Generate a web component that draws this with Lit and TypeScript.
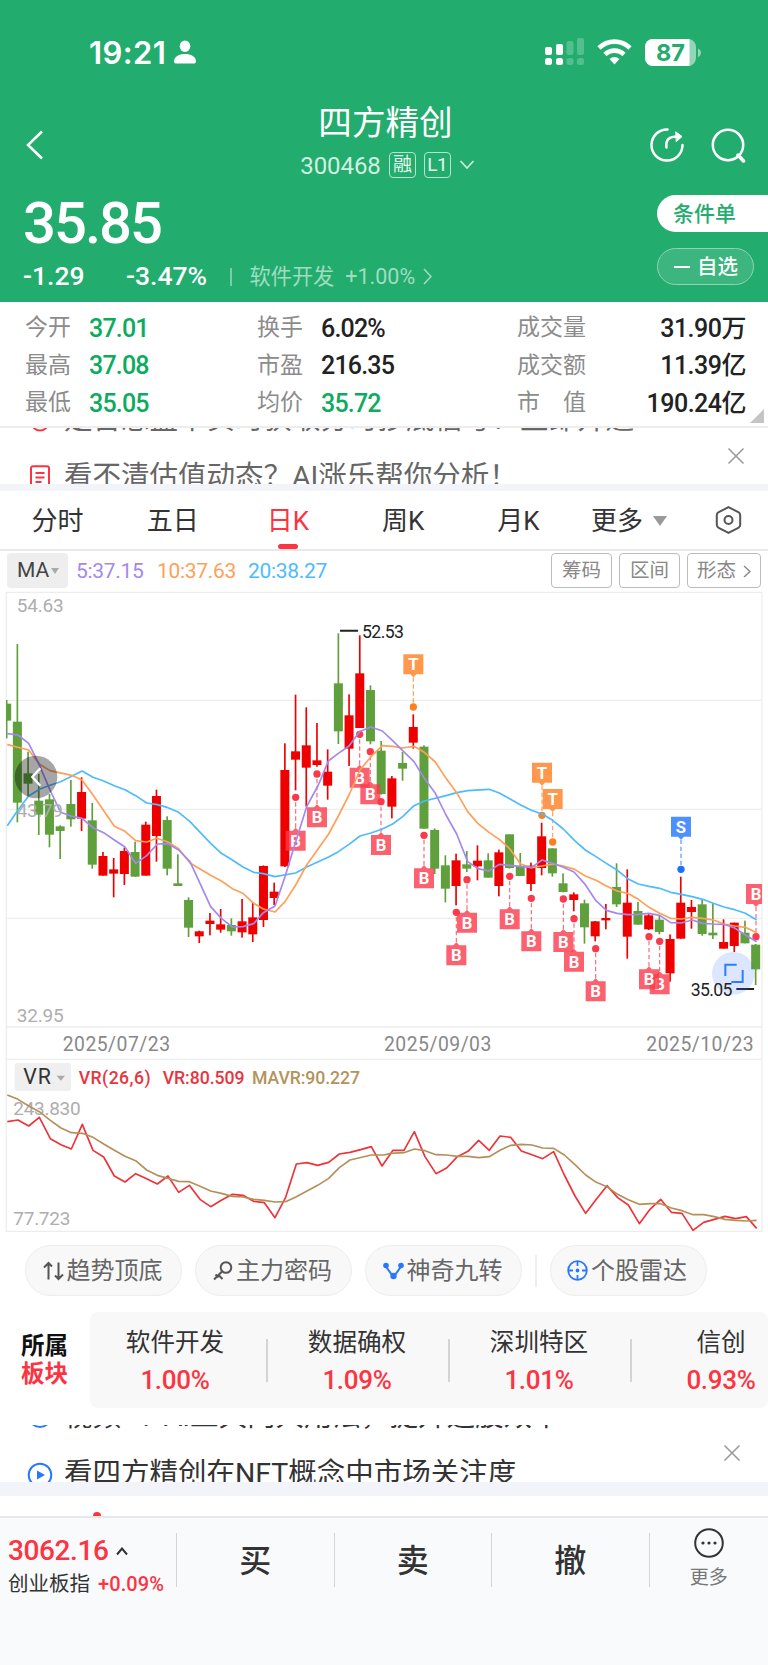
import { LitElement, html, svg, css } from "lit";
import { customElement } from "lit/decorators.js";

type Candle = [number, number, number, number, 0 | 1];

// Each candle: high, body top, body bottom, low, rising flag (chart units, 3 per pixel).
const CANDLES: Candle[] = [
  [330, 341, 392, 445, 0], [162, 395, 638, 697, 0], [485, 550, 581, 620, 0], [552, 632, 674, 735, 0],
  [612, 628, 734, 772, 0], [706, 709, 723, 807, 0], [570, 642, 688, 710, 0], [562, 606, 686, 723, 1],
  [639, 691, 824, 836, 0], [786, 798, 857, 857, 1], [804, 838, 851, 922, 1], [773, 783, 852, 885, 1],
  [755, 786, 860, 860, 0], [695, 704, 857, 857, 1], [599, 618, 738, 815, 1], [679, 690, 836, 856, 0],
  [793, 880, 888, 888, 0], [922, 930, 1013, 1041, 0], [1022, 1024, 1039, 1059, 1], [969, 992, 1002, 1036, 1],
  [957, 1003, 1019, 1028, 1], [985, 1005, 1024, 1037, 0], [927, 994, 1027, 1043, 1], [936, 982, 1033, 1056, 1],
  [826, 828, 990, 1011, 1], [878, 905, 924, 945, 1], [460, 540, 829, 831, 1], [314, 484, 509, 601, 1],
  [352, 466, 533, 650, 1], [399, 511, 525, 530, 1], [478, 545, 587, 629, 1], [130, 280, 424, 462, 0],
  [313, 376, 476, 528, 1], [136, 250, 414, 414, 1], [286, 300, 454, 463, 0], [453, 482, 612, 614, 0],
  [558, 565, 650, 685, 1], [486, 519, 536, 572, 0], [373, 411, 458, 476, 1], [466, 470, 716, 716, 0],
  [715, 720, 836, 852, 0], [796, 826, 896, 937, 0], [791, 811, 888, 946, 1], [783, 823, 836, 846, 0],
  [766, 812, 829, 871, 1], [790, 811, 863, 863, 0], [779, 787, 888, 919, 1], [733, 733, 834, 836, 0],
  [789, 828, 858, 858, 0], [818, 827, 882, 903, 1], [698, 739, 834, 856, 1], [775, 775, 850, 860, 0],
  [850, 880, 906, 907, 0], [907, 913, 930, 964, 1], [929, 940, 1012, 1061, 0], [993, 994, 1039, 1054, 1],
  [942, 984, 991, 1018, 1], [820, 891, 943, 951, 0], [838, 938, 1040, 1106, 1], [936, 963, 1004, 1004, 0],
  [970, 976, 1018, 1020, 1], [975, 989, 1026, 1033, 0], [1033, 1047, 1150, 1175, 1], [860, 938, 1046, 1046, 1],
  [930, 951, 966, 1016, 1], [928, 943, 1032, 1037, 0], [940, 1028, 1036, 1047, 0], [988, 1056, 1076, 1076, 1],
  [998, 998, 1068, 1086, 1], [992, 1028, 1060, 1060, 0], [1062, 1064, 1138, 1185, 0],
];

const MA5 =
  "22,431 54,435 86,460 116,520 150,600 182,667 213,678 246,685 279,713 311,728 343,750 375,771 407,820 440,797 472,762 504,761 536,780 570,815 600,880 632,950 664,985 697,1011 729,1010 761,1001 790,968 825,948 855,860 887,755 920,650 955,585 985,513 1015,490 1047,468 1080,424 1113,411 1147,423 1178,452 1208,482 1242,515 1273,565 1306,610 1338,675 1370,732 1403,815 1434,836 1467,843 1498,823 1529,826 1562,829 1594,833 1626,810 1658,820 1690,832 1722,846 1756,884 1788,932 1819,961 1851,970 1883,974 1915,973 1947,970 1979,976 2012,998 2044,999 2076,990 2108,1000 2140,1002 2172,1003 2204,1014 2236,1035 2270,1055";
const MA10 =
  "22,464 86,480 118,522 150,542 215,556 246,570 279,615 343,709 375,724 407,752 440,756 471,745 504,756 536,776 570,819 600,837 632,856 664,873 697,896 729,910 761,940 790,957 825,966 855,935 887,885 920,825 952,780 986,732 1015,678 1047,615 1080,540 1113,500 1147,467 1178,469 1208,474 1242,469 1273,487 1306,516 1338,565 1370,608 1403,665 1434,701 1467,727 1498,748 1529,776 1562,822 1594,833 1626,828 1658,822 1690,828 1724,838 1756,858 1788,871 1819,888 1851,903 1883,910 1915,928 1947,952 1979,970 2012,985 2044,987 2076,982 2108,985 2140,990 2172,1002 2204,1008 2236,1012 2270,1028";
const MA20 =
  "22,707 54,660 86,618 118,598 150,586 182,575 246,543 279,562 311,573 343,587 375,599 407,617 440,639 472,644 504,653 536,667 570,695 632,760 664,790 697,810 729,831 761,847 790,851 825,860 887,849 920,831 986,801 1015,785 1047,763 1080,738 1113,729 1147,717 1178,702 1208,680 1242,647 1273,633 1338,617 1370,608 1403,602 1467,598 1498,609 1529,626 1562,645 1594,661 1626,672 1658,691 1690,717 1724,752 1756,780 1788,800 1819,820 1851,840 1883,866 1915,882 1947,889 1979,895 2012,907 2044,913 2076,920 2108,928 2140,940 2172,951 2204,959 2236,970 2270,990";
const VR =
  "22,305 54,300 86,318 118,292 151,356 183,374 214,387 247,313 279,391 311,411 343,468 375,486 407,461 440,476 472,492 504,468 536,517 568,496 600,538 632,560 664,541 697,523 729,526 761,544 793,548 825,593 857,532 889,432 921,428 953,436 986,427 1018,402 1050,397 1082,389 1114,380 1146,438 1179,391 1212,391 1243,335 1275,410 1308,461 1340,444 1372,410 1404,394 1436,361 1468,391 1500,348 1532,352 1564,393 1596,404 1628,416 1661,395 1693,465 1725,528 1757,580 1789,538 1821,497 1853,533 1885,555 1918,611 1950,568 1982,538 2014,577 2046,580 2079,631 2111,607 2143,598 2175,589 2207,596 2239,590 2270,625";
const MAVR =
  "22,225 54,238 86,258 118,275 151,301 183,324 214,338 247,340 279,352 311,372 343,391 375,409 407,422 440,450 472,466 504,475 536,484 568,485 600,499 632,513 664,520 697,529 729,531 761,538 793,541 825,546 857,545 889,530 953,496 986,475 1018,443 1050,420 1114,405 1152,405 1172,400 1212,398 1243,387 1275,392 1308,404 1340,405 1372,409 1404,409 1436,413 1468,410 1500,391 1532,376 1564,373 1596,375 1628,384 1661,385 1693,405 1725,434 1757,465 1789,487 1821,500 1853,523 1885,539 1918,553 1950,551 1982,551 2014,564 2046,572 2079,584 2111,584 2143,590 2175,598 2207,601 2239,603 2270,601";

type Marker = [string, number, number, number];
// Letter, x, dot y, label box top.
const MARKERS: Marker[] = [
  ["B", 1979, 1054, 1153], ["B", 1947, 1040, 1138], ["B", 1787, 1076, 1174], ["B", 1722, 986, 1085],
  ["B", 1690, 927, 1026], ["B", 1594, 925, 1024], ["B", 1529, 859, 958], ["B", 1401, 869, 968],
  ["B", 1369, 967, 1066], ["B", 1272, 736, 835], ["B", 1143, 635, 735], ["B", 1111, 485, 583],
  ["B", 1079, 433, 533], ["B", 951, 552, 652], ["B", 887, 622, 722], ["T", 1240, 351, 193],
  ["T", 1626, 676, 518], ["T", 1658, 756, 597], ["S", 2043, 838, 680], ["B", 2268, 1040, 882],
];
const BOX: Record<string, string> = { B: "rgba(250,57,74,.8)", T: "rgba(255,134,45,.85)", S: "rgba(40,120,255,.82)" };
const DOT: Record<string, string> = { B: "#fa394a", T: "#ff7f1f", S: "#1a72ff" };

@customElement("kline-chart")
export class KlineChart extends LitElement {
  static styles = css`
    :host { display: block; height: 644px; }
    svg { display: block; }
    text { font-family: Roboto, "Noto Sans CJK SC", sans-serif; }
    .axis { fill: #aeaeae; font-size: 57px; }
    .date { fill: #888; font-size: 58px; }
    .mark { fill: #fff; font: 700 50px Roboto, sans-serif; text-anchor: middle; }
    .tag { fill: #222; font-size: 53px; }
    .ind { font-size: 53px; font-weight: 500; }
    .grid { stroke: #ededed; stroke-width: 4; fill: none; }
    .line { fill: none; stroke-width: 5; stroke-linejoin: round; }
  `;

  private candle([high, top, bottom, low, up]: Candle, i: number) {
    const x = 20 + 32.1 * i;
    const c = up ? "#ee0000" : "#5f9f3c";
    return svg`<rect x=${x - 2.5} y=${high} width="5" height=${low - high} fill=${c}></rect>
      <rect x=${x - 13.5} y=${top} width="27" height=${Math.max(bottom - top, 5)} fill=${c}></rect>`;
  }

  private marker([t, x, dot, top]: Marker) {
    const above = top < dot;
    const edge = above ? top + 60 : top;
    const d = above ? 9 : -9;
    return svg`<line x1=${x} x2=${x} y1=${edge + d} y2=${dot} stroke=${DOT[t]} stroke-width="3.5" stroke-dasharray="13 8" opacity=".75"></line>
      <circle cx=${x} cy=${dot} r="11" fill=${DOT[t]}></circle>
      <path d=${above
        ? `M${x - 30} ${top}h60v60h-21l-9 9l-9 -9h-21z`
        : `M${x - 30} ${top}h21l9 -9l9 9h21v60h-60z`} fill=${BOX[t]}></path>
      <text class="mark" x=${x} y=${top + 48}>${t}</text>`;
  }

  render() {
    return html`<svg width="768" height="644" viewBox="0 0 2304 1932">
      <defs><clipPath id="plot"><rect x="18" y="0" width="2268" height="1320"></rect></clipPath></defs>
      <path class="grid" d="M18 7H2286M18 331H2286M18 658H2286M18 985H2286M18 1311H2286M18 1408H2286M18 1924H2286M19 7V1926M2286 7V1926"></path>
      <g clip-path="url(#plot)">
        ${CANDLES.map((c, i) => this.candle(c, i))}
        ${MARKERS.map((m) => this.marker(m))}
      </g>
      <polyline class="line" points=${MA20} stroke="#4dbbff"></polyline>
      <polyline class="line" points=${MA10} stroke="#ff9f58"></polyline>
      <polyline class="line" points=${MA5} stroke="#a488f0"></polyline>
      <text class="axis" x="50" y="65" textLength="141">54.63</text>
      <text class="axis" x="50" y="681" textLength="139">43.79</text>
      <text class="axis" x="50" y="1297" textLength="141">32.95</text>
      <circle cx="108" cy="561" r="64" fill="rgba(0,0,0,.35)"></circle>
      <path d="M121 535L97 561L121 587" fill="none" stroke="#fff" stroke-width="7"></path>
      <path d="M1020 122H1074M2209 1197H2262" stroke="#222" stroke-width="6"></path>
      <text class="tag" x="1086" y="143" textLength="126">52.53</text>
      <circle cx="2200" cy="1150" r="64" fill="rgba(60,120,255,.18)"></circle>
      <path d="M2176 1158V1124H2210M2228 1140V1176H2194" fill="none" stroke="#2d7bff" stroke-width="6"></path>
      <text class="tag" x="2072" y="1218" textLength="125">35.05</text>
      <text class="date" x="188" y="1384" textLength="322">2025/07/23</text>
      <text class="date" x="1152" y="1384" textLength="322">2025/09/03</text>
      <text class="date" x="1939" y="1384" textLength="322">2025/10/23</text>
      <rect x="44" y="1419" width="169" height="84" rx="8" fill="#efefef"></rect>
      <text x="70" y="1481" font-size="64" fill="#333" textLength="83">VR</text>
      <path d="M170 1457h25l-12.5 15z" fill="#aaa"></path>
      <text class="ind" x="236" y="1482" fill="#e93440" textLength="216">VR(26,6)</text>
      <text class="ind" x="488" y="1482" fill="#e93440" textLength="246">VR:80.509</text>
      <text class="ind" x="756" y="1482" fill="#b4935c" textLength="324">MAVR:90.227</text>
      <g transform="translate(0 1290)">
        <text class="axis" x="40" y="286" textLength="202">243.830</text>
        <text class="axis" x="40" y="615" textLength="171">77.723</text>
        <polyline class="line" points=${VR} stroke="#ee3338"></polyline>
        <polyline class="line" points=${MAVR} stroke="#b3905a"></polyline>
      </g>
    </svg>`;
  }
}

const closeIcon = html`<svg width="18" height="18" viewBox="0 0 18 18"><path d="M1.5 1.5l15 15M16.5 1.5l-15 15" stroke="#999" stroke-width="1.5"></path></svg>`;

@customElement("app-root")
export class AppRoot extends LitElement {
  static styles = css`
    :host { display: block; width: 768px; height: 1665px; overflow: hidden; background: #fff; color: #333;
      font-family: Roboto, "Noto Sans CJK SC", sans-serif; line-height: 1; white-space: nowrap; }
    * { box-sizing: border-box; }
    svg { display: block; flex: none; }
    .row { display: flex; align-items: center; }
    .head { height: 302px; background: #22ac6e; color: #fff; }
    .status { height: 104px; padding: 0 67px 0 89px; justify-content: space-between; }
    .time { font: 600 31px/1 Inter, sans-serif; letter-spacing: .4px; }
    .status .l { gap: 8px; }
    .status .r { gap: 13px; }
    .nav { height: 86px; padding: 0 22px 0 25px; justify-content: space-between; align-items: flex-start; }
    .nav .side { width: 112px; margin-top: 26px; }
    .nav .end { justify-content: flex-end; gap: 25px; margin-top: 23px; }
    .title { display: flex; flex-direction: column; align-items: center; }
    .name { font-size: 33.6px; line-height: 40px; font-weight: 400; }
    .sub { margin-top: 7px; height: 27px; font-size: 24px; gap: 8px; letter-spacing: -.1px; color: #d9f2e5; padding-left: 4px; }
    .code { color: #d2f0e1; padding-top: 2px; }
    .tag { border: 1.5px solid #b7e4cd; border-radius: 4px; width: 27px; height: 26px; display: grid; place-items: center; font-size: 19px; letter-spacing: -.5px; color: #e6f7ee; }
    .quote { display: grid; grid-template-columns: 1fr auto; height: 112px; padding-left: 23px; }
    .price { font-size: 58px; font-weight: 500; height: 68px; line-height: 67px; letter-spacing: -2px; }
    .chg { font-size: 26.5px; font-weight: 500; height: 37px; letter-spacing: 0; }
    .chg span:first-child { width: 103px; }
    .bar { width: 1.5px; height: 18px; background: #7acda8; margin: 0 18px 0 0; }
    .chg .b { width: 104px; }
    .ind { font-size: 21.2px; font-weight: 400; letter-spacing: 0; color: #a0dcc0; }
    .pct2 { font-size: 21.5px; font-weight: 400; letter-spacing: 0; color: #a0dcc0; margin: 0 8px 0 11px; }
    .pills { display: flex; flex-direction: column; gap: 16px; padding-top: 5px; width: 111px; }
    .cond { height: 37px; border-radius: 19px 0 0 19px; background: #fff; color: #22ac6e; font-size: 21px; font-weight: 500; line-height: 38px; padding-left: 16px; }
    .fav { width: 97px; height: 37px; border-radius: 19px; border: 1.5px solid #8fd3b3; background: #3cb57f; font-size: 20.5px; font-weight: 500; gap: 7px; padding: 1px 0 0 16px; }
    .dash { width: 16px; height: 2px; background: #fff; }

    .stats { height: 126px; padding: 7px 22px 6px 25px; display: grid; grid-template-columns: 64px 168px 64px 196px auto; grid-template-rows: repeat(3, 37.5px); align-items: center; border-bottom: 2px solid #ededed; position: relative; }
    .stats .k { color: #8c8c8c; font-size: 23px; }
    .stats .v { color: #222; font-size: 25px; font-weight: 500; letter-spacing: -.8px; padding-top: 1px; }
    .stats .g { color: #0cab5e; }
    .stats .last { display: flex; justify-content: space-between; align-items: center; width: 229px; }
    .stats .last .v { letter-spacing: -.5px; }
    .corner { position: absolute; right: 4px; bottom: 3px; width: 14px; height: 14px; background: #c4c4c4; clip-path: polygon(100% 0, 100% 100%, 0 100%); }

    .ticker { height: 56px; overflow: hidden; display: flex; justify-content: space-between; padding: 0 23px 0 30px; font-size: 28.5px; color: #666; }
    .ticker .lines { margin-top: -36px; }
    .ticker .line { height: 57px; gap: 14px; }
    .ticker .x { margin-top: 19px; height: 18px; }
    .dark { color: #333; padding: 0 27px 0 27px; height: 57px; margin-top: 17px; }
    .dark .line { gap: 11px; }
    .dark .lines { margin-top: -36px; }
    .gap { height: 7px; background: #f2f4f9; }
    .gap.tall { height: 14px; }

    .tabs { height: 60px; border-bottom: 2px solid #e9e9e9; font-size: 26px; padding: 0 26px 0 0; }
    .tab { width: 115.2px; height: 58px; padding-top: 2px; display: grid; place-items: center; position: relative; }
    .on { color: #fc3442; }
    .on::after { content: ""; position: absolute; bottom: 0; width: 20px; height: 5px; border-radius: 2.5px; background: #fc3442; }
    .more { gap: 10px; margin: 2px auto 0 15px; }

    .ma { height: 39px; padding: 2px 7px 2px 7px; font-size: 21px; }
    .mabtn { width: 61px; height: 35px; border-radius: 4px; background: #eee; color: #444; gap: 2px; padding-left: 10px; margin-right: 8px; }
    .ma .val { letter-spacing: -.3px; padding-top: 2px; }
    .m5 { color: #a488f0; width: 81px; }
    .m10 { color: #ff9f58; width: 91px; }
    .m20 { color: #4dbbff; }
    .opts { margin-left: auto; gap: 7px; }
    .opt { border: 1.5px solid #bbb; border-radius: 4px; height: 35px; width: 61px; color: #888; font-size: 19.5px; justify-content: center; gap: 7px; padding-top: 1px; }
    .wide { width: 74px; }

    .chips { height: 51px; margin: 11px 0 0 25px; gap: 13px; font-size: 24px; color: #666; }
    .chip { width: 157px; height: 51px; border-radius: 26px; background: #f8f8f8; border: 1.5px solid #ededed; justify-content: center; gap: 3px; }
    .chip svg { margin-left: -2px; }
    .sep { width: 1.5px; height: 32px; background: #eee; }

    .boards { height: 96px; margin-top: 16px; }
    .bl { width: 90px; padding-left: 21px; font-size: 23.5px; line-height: 28px; font-weight: 700; color: #111; }
    .bl .r, .cell .r { color: #fc3442; }
    .cells { width: 678px; height: 96px; background: #f8f8f8; border-radius: 8px; overflow: hidden; }
    .cell { width: 182px; flex: none; display: flex; flex-direction: column; align-items: center; font-size: 24.6px; gap: 11px; padding-top: 4px; }
    .cell:first-child { width: 176px; padding-right: 6px; }
    .cell .r { font-size: 26px; font-weight: 500; letter-spacing: -.3px; }
    .vd { width: 1.5px; height: 43px; background: #d4d4d4; flex: none; margin: 0 -1.5px 0 0; }

    .under { height: 20px; overflow: hidden; padding-left: 93px; }
    .dot { width: 8px; height: 8px; border-radius: 50%; background: #fc3442; margin-top: 16px; }
    .foot { height: 149px; background: #f9fafc; border-top: 2px solid #e6e7e9; display: flex; align-items: flex-start; }
    .idx { width: 176px; padding: 21px 0 0 8px; }
    .idx .n { font-size: 28px; font-weight: 500; color: #fc3442; height: 24px; gap: 8px; letter-spacing: -.4px; }
    .idx .m { font-size: 20.5px; height: 24px; margin-top: 9px; gap: 8px; }
    .idx .p { color: #fc3442; font-size: 20px; font-weight: 500; letter-spacing: .1px; }
    .act { width: 157.5px; height: 54px; margin-top: 15px; padding-top: 2px; border-left: 1.5px solid #d4d5d8; display: grid; place-items: center; font-size: 32px; font-weight: 500; }
    .fm { flex: 1; height: 54px; margin-top: 15px; border-left: 1.5px solid #d4d5d8; display: flex; flex-direction: column; align-items: center; gap: 10px; font-size: 19px; color: #777; }
    .fm svg { margin-top: -5px; }
  `;

  render() {
    const stat = (k: string, v: string, cls = "") => html`<span class="k">${k}</span><span class="v ${cls}">${v}</span>`;
    const last = (k: string, v: string) => html`<div class="last"><span class="k">${k}</span><span class="v">${v}</span></div>`;
    const cell = (n: string, p: string) => html`<div class="cell"><span>${n}</span><span class="r">${p}</span></div>`;
    return html`
      <header class="head">
        <div class="status row">
          <div class="l row"><span class="time">19:21</span>
            <svg width="22" height="24" viewBox="0 0 22 24"><ellipse cx="11" cy="6.2" rx="5.3" ry="5.8" fill="#fff"></ellipse><path d="M0 21.5C0 16.5 5 14 11 14s11 2.500 11 7.500c0 1.500-1 2-2.500 2h-17C1 23.500 0 23 0 21.500z" fill="#fff"></path></svg>
          </div>
          <div class="r row">
            <svg width="39" height="28" viewBox="0 0 39 28" fill="#fff">
              <rect x="0" y="9" width="7" height="8" rx="2"></rect><rect x="11" y="6" width="7" height="11" rx="2"></rect>
              <rect x="0" y="20" width="7" height="7" rx="2.500"></rect><rect x="11" y="20" width="7" height="7" rx="2.500"></rect>
              <g opacity=".22"><rect x="21.500" y="3" width="7" height="14" rx="2"></rect><rect x="32" y="0" width="7" height="17" rx="2"></rect><rect x="21.500" y="20" width="7" height="7" rx="2.500"></rect><rect x="32" y="20" width="7" height="7" rx="2.500"></rect></g>
            </svg>
            <svg width="35" height="26" viewBox="0 0 35 26" fill="none" stroke="#fff" stroke-width="4.600">
              <path d="M2 9a22 22 0 0 1 31 0"></path><path d="M8 15.500a13.500 13.500 0 0 1 19 0"></path><path d="M17.500 25.500l-5-5.500a7.500 7.500 0 0 1 10 0z" fill="#fff" stroke="none"></path>
            </svg>
            <svg width="56" height="27" viewBox="0 0 56 27">
              <defs><clipPath id="bat"><rect width="51" height="27" rx="8"></rect></clipPath></defs>
              <g clip-path="url(#bat)"><rect width="51" height="27" fill="#fff" opacity=".5"></rect><rect width="44.500" height="27" fill="#fff"></rect></g>
              <path d="M53 9.500c4 1.500 4 7 0 8.500z" fill="#fff" opacity=".5"></path>
              <text x="25.500" y="22" text-anchor="middle" font-family="Inter" font-weight="700" font-size="23.500" fill="#22ac6e">87</text>
            </svg>
          </div>
        </div>
        <div class="nav row">
          <div class="side row"><svg width="20" height="30" viewBox="0 0 20 30"><path d="M17 1.500L3 15l14 13.500" fill="none" stroke="#fff" stroke-width="2.500"></path></svg></div>
          <div class="title"><span class="name">四方精创</span>
            <div class="sub row"><span class="code">300468</span><span class="tag">融</span><span class="tag">L1</span>
              <svg width="16" height="10" viewBox="0 0 16 10"><path d="M1.500 1l6.500 7L14.500 1" fill="none" stroke="#c9ecd9" stroke-width="1.800"></path></svg></div>
          </div>
          <div class="side row end">
            <svg width="36" height="36" viewBox="0 0 36 36" fill="none" stroke="#fff" stroke-width="2.500" stroke-linecap="round"><path d="M18.500 2.500A15.500 15.500 0 1 0 33.500 18"></path><path d="M17.500 20.500c-1-8 2.500-11 11-11"></path><path d="M27 5l6 4.500-5.500 5z" fill="#fff" stroke-width="1"></path></svg>
            <svg width="36" height="36" viewBox="0 0 36 36" fill="none" stroke="#fff" stroke-width="2.500"><circle cx="18" cy="18" r="15.200"></circle><path d="M28 28l5.500 6" stroke-width="3.500" stroke-linecap="round"></path></svg>
          </div>
        </div>
        <div class="quote">
          <div>
            <div class="price">35.85</div>
            <div class="chg row"><span>-1.29</span><span class="b">-3.47%</span><i class="bar"></i><span class="ind">软件开发</span><span class="pct2">+1.00%</span>
              <svg width="9" height="17" viewBox="0 0 9 17"><path d="M1 1l7 7.500L1 16" fill="none" stroke="#a0dcc0" stroke-width="1.600"></path></svg></div>
          </div>
          <div class="pills"><span class="cond">条件单</span><span class="fav row"><i class="dash"></i>自选</span></div>
        </div>
      </header>
      <section class="stats">
        ${stat("今开", "37.01", "g")}${stat("换手", "6.02%")}${last("成交量", "31.90万")}
        ${stat("最高", "37.08", "g")}${stat("市盈", "216.35")}${last("成交额", "11.39亿")}
        ${stat("最低", "35.05", "g")}${stat("均价", "35.72", "g")}${last("市　值", "190.24亿")}
        <i class="corner"></i>
      </section>
      <section class="ticker">
        <div class="lines">
          <div class="line row"><svg width="20" height="24" viewBox="0 0 20 24"><circle cx="10" cy="13" r="8.500" fill="none" stroke="#fc3442" stroke-width="2"></circle></svg>是否想盘中实时获取分时抄底信号？立即开通</div>
          <div class="line row"><svg width="20" height="26" viewBox="0 0 20 26"><path d="M3 1.200h14a2 2 0 0 1 2 2v19.500a2 2 0 0 1-2 2H3a2 2 0 0 1-2-2V3.200a2 2 0 0 1 2-2zM5.500 8h9M5.500 12.500h9M5.500 17h6" fill="none" stroke="#fc3442" stroke-width="2"></path></svg>看不清估值动态？AI涨乐帮你分析！</div>
        </div>
        <div class="x">${closeIcon}</div>
      </section>
      <div class="gap"></div>
      <nav class="tabs row">
        <span class="tab">分时</span><span class="tab">五日</span><span class="tab on">日K</span><span class="tab">周K</span><span class="tab">月K</span>
        <span class="more row">更多<svg width="14" height="10" viewBox="0 0 14 10"><path d="M0 0h14L7 10z" fill="#999"></path></svg></span>
        <svg width="27" height="28" viewBox="0 0 27 28" fill="none" stroke="#555" stroke-width="2"><path d="M13.500 1.200l9.800 5c1.200.6 1.900 1.600 1.900 3v9.600c0 1.400-.7 2.400-1.900 3l-9.800 5-9.800-5c-1.200-.6-1.900-1.600-1.900-3V9.200c0-1.400.7-2.400 1.900-3z"></path><circle cx="13.500" cy="14" r="4"></circle></svg>
      </nav>
      <div class="ma row">
        <span class="mabtn row">MA<svg width="8" height="6" viewBox="0 0 8 6"><path d="M0 0h8L4 6z" fill="#aaa"></path></svg></span>
        <span class="val m5">5:37.15</span><span class="val m10">10:37.63</span><span class="val m20">20:38.27</span>
        <div class="opts row"><span class="opt row">筹码</span><span class="opt row">区间</span><span class="opt wide row">形态<svg width="8" height="13" viewBox="0 0 8 13"><path d="M1 1l6 5.500L1 12" fill="none" stroke="#888" stroke-width="1.400"></path></svg></span></div>
      </div>
      <kline-chart></kline-chart>
      <div class="chips row">
        <span class="chip row"><svg width="21" height="20" viewBox="0 0 21 20" fill="none" stroke="#555" stroke-width="2"><path d="M5.500 18.500V2M1 6.500L5.500 2 9 5.500M15.500 1.500V18M12 14.500l3.500 3.500L20 13.500"></path></svg>趋势顶底</span>
        <span class="chip row"><svg width="20" height="20" viewBox="0 0 20 20" fill="none" stroke="#555" stroke-width="2"><circle cx="13" cy="6.500" r="5.300"></circle><path d="M9 10.500L1 18.500M5.500 14l4 4M2.500 13.500l3 3M1 18.500"></path></svg>主力密码</span>
        <span class="chip row"><svg width="21" height="20" viewBox="0 0 21 20" fill="#2878ff"><path d="M2.500 5L10.500 16 18.500 5" fill="none" stroke="#2878ff" stroke-width="2"></path><circle cx="3" cy="4.500" r="2.800"></circle><circle cx="18" cy="4.500" r="2.800"></circle><circle cx="10.500" cy="15" r="3.200"></circle></svg>神奇九转</span>
        <i class="sep"></i>
        <span class="chip row"><svg width="21" height="21" viewBox="0 0 21 21" fill="none" stroke="#2878ff" stroke-width="1.800"><circle cx="10.500" cy="10.500" r="9.300"></circle><path d="M10.500 1v5M10.500 15v5M1 10.500h5M15 10.500h5"></path><circle cx="10.500" cy="10.500" r="1" fill="#2878ff"></circle></svg>个股雷达</span>
      </div>
      <section class="boards row">
        <div class="bl"><div>所属</div><div class="r">板块</div></div>
        <div class="cells row">${cell("软件开发", "1.00%")}<i class="vd"></i>${cell("数据确权", "1.09%")}<i class="vd"></i>${cell("深圳特区", "1.01%")}<i class="vd"></i>${cell("信创", "0.93%")}</div>
      </section>
      <section class="ticker dark">
        <div class="lines">
          <div class="line row"><svg width="26" height="25" viewBox="0 0 26 25"><circle cx="13" cy="11" r="11" fill="none" stroke="#2878ff" stroke-width="2"></circle></svg>视频 ４ AI工具两大用法，提升选股效率</div>
          <div class="line row"><svg width="26" height="26" viewBox="0 0 26 26"><circle cx="13" cy="13" r="11.300" fill="none" stroke="#2878ff" stroke-width="2"></circle><path d="M10 8.500l8 4.500-8 4.500z" fill="#2878ff"></path></svg>看四方精创在NFT概念中市场关注度</div>
        </div>
        <div class="x">${closeIcon}</div>
      </section>
      <div class="gap tall"></div>
      <div class="under"><div class="dot"></div></div>
      <footer class="foot">
        <div class="idx">
          <div class="n row">3062.16<svg width="12" height="9" viewBox="0 0 12 9"><path d="M1 7.500L6 1.500l5 6" fill="none" stroke="#333" stroke-width="2"></path></svg></div>
          <div class="m row">创业板指<span class="p">+0.09%</span></div>
        </div>
        <div class="act">买</div><div class="act">卖</div><div class="act">撤</div>
        <div class="fm"><svg width="30" height="30" viewBox="0 0 30 30"><circle cx="15" cy="15" r="13.800" fill="none" stroke="#333" stroke-width="2"></circle><g fill="#333"><circle cx="9" cy="15" r="1.600"></circle><circle cx="15" cy="15" r="1.600"></circle><circle cx="21" cy="15" r="1.600"></circle></g></svg>更多</div>
      </footer>`;
  }
}
